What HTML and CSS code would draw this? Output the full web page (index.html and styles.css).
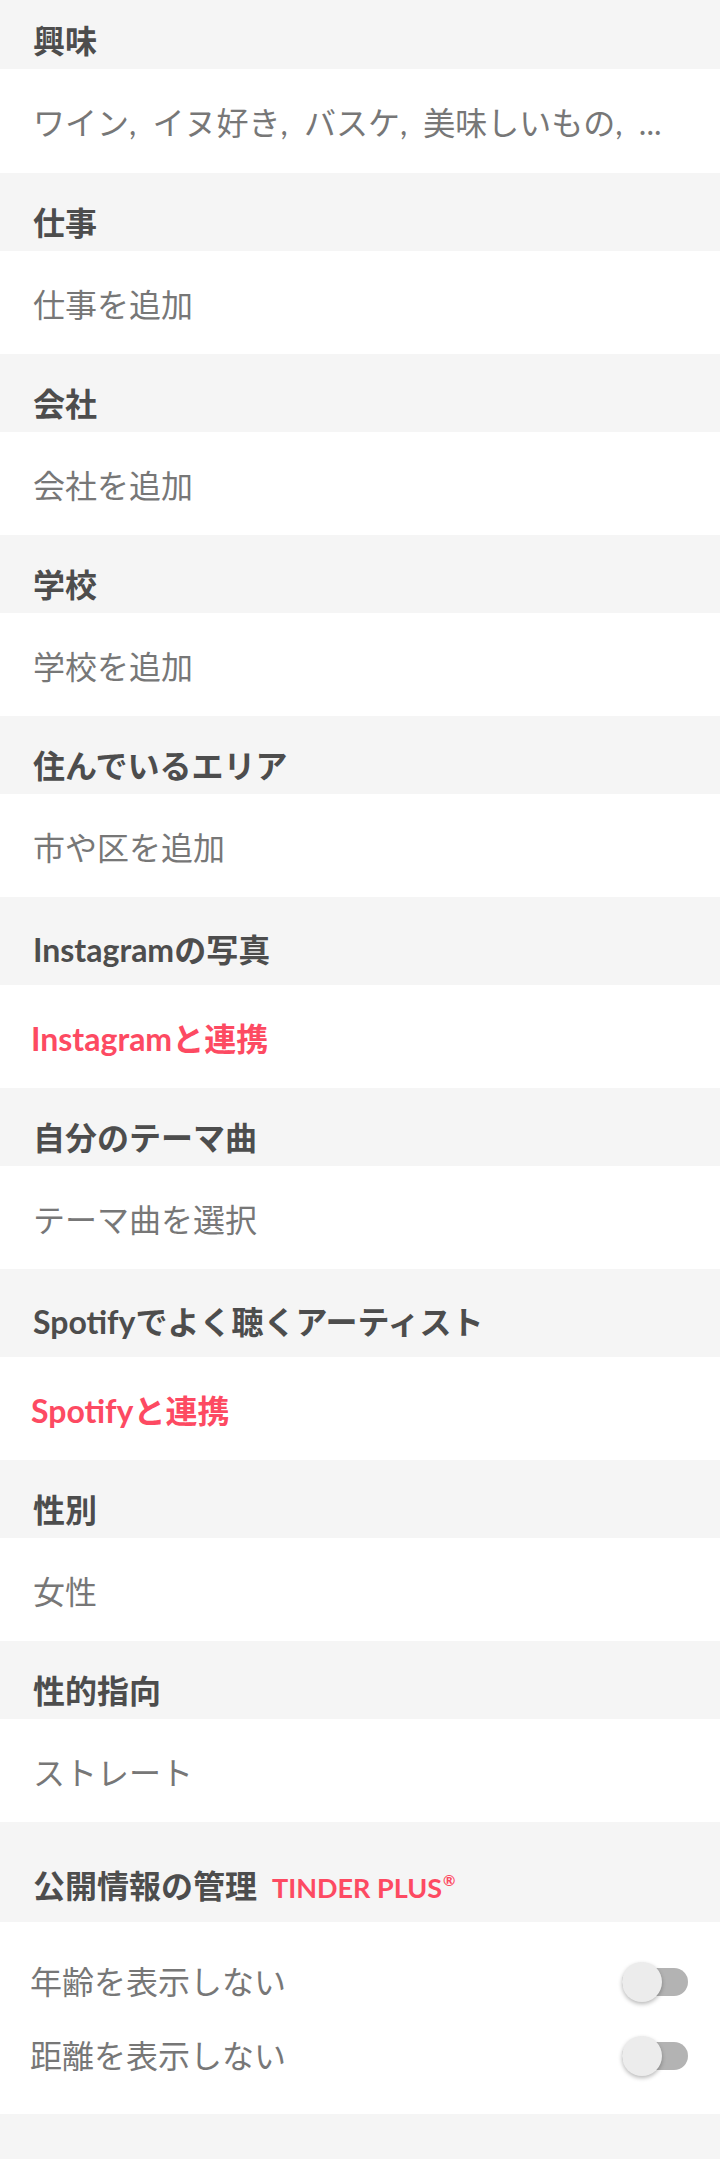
FILE: index.html
```html
<!DOCTYPE html>
<html lang="ja">
<head>
<meta charset="utf-8">
<title>プロフィール編集</title>
<link rel="stylesheet" href="styles.css">
</head>
<body>
<main class="profile">
  <h2 class="sec-head sec-head--first">興味</h2>
  <div class="sec-value sec-value--list">ワイン, イヌ好き, バスケ, 美味しいもの, ...</div>

  <h2 class="sec-head">仕事</h2>
  <div class="sec-value">仕事を追加</div>

  <h2 class="sec-head">会社</h2>
  <div class="sec-value">会社を追加</div>

  <h2 class="sec-head">学校</h2>
  <div class="sec-value">学校を追加</div>

  <h2 class="sec-head">住んでいるエリア</h2>
  <div class="sec-value">市や区を追加</div>

  <h2 class="sec-head sec-head--latin">Instagramの写真</h2>
  <div class="sec-value sec-value--link">Instagramと連携</div>

  <h2 class="sec-head">自分のテーマ曲</h2>
  <div class="sec-value">テーマ曲を選択</div>

  <h2 class="sec-head sec-head--latin">Spotifyでよく聴くアーティスト</h2>
  <div class="sec-value sec-value--link">Spotifyと連携</div>

  <h2 class="sec-head">性別</h2>
  <div class="sec-value">女性</div>

  <h2 class="sec-head">性的指向</h2>
  <div class="sec-value">ストレート</div>

  <h2 class="sec-head sec-head--plus">公開情報の管理<span class="plus-badge">TINDER PLUS<sup class="reg">®</sup></span></h2>
  <div class="toggles">
    <div class="toggle-row">
      <span class="toggle-label">年齢を表示しない</span>
      <span class="switch"><span class="thumb"></span></span>
    </div>
    <div class="toggle-row">
      <span class="toggle-label">距離を表示しない</span>
      <span class="switch"><span class="thumb"></span></span>
    </div>
  </div>
  <div class="footer-space"></div>
</main>
</body>
</html>
```

FILE: styles.css
```css
* {
  box-sizing: border-box;
  margin: 0;
  padding: 0;
}

html, body {
  background: #f5f5f5;
}

body {
  font-family: Lato, "Noto Sans CJK JP", sans-serif;
  width: 720px;
  min-height: 2159px;
}

.profile {
  display: flex;
  flex-direction: column;
}

.sec-head {
  background: #f5f5f5;
  color: #4d4d4d;
  font-size: 32px;
  line-height: 32px;
  font-weight: 700;
  padding: 34px 33px 12px;
  white-space: nowrap;
}

.sec-head--first {
  padding-top: 25px;
}

.sec-head--latin {
  padding-top: 37px;
  padding-bottom: 19px;
}

.sec-head--plus {
  padding-top: 48px;
  padding-bottom: 20px;
}

.plus-badge {
  margin-left: 15px;
  color: #fd4a62;
  font-size: 27px;
  line-height: 1;
  font-weight: 700;
}

.reg {
  font-size: 15px;
  line-height: 0;
  vertical-align: 12px;
  margin-left: 1px;
}

.sec-value {
  background: #fff;
  height: 103px;
  display: flex;
  align-items: center;
  padding: 0 33px;
  font-size: 32px;
  color: #777777;
  white-space: nowrap;
}

.sec-value--list {
  height: 104px;
  word-spacing: 8px;
}

.sec-value--link {
  color: #fd4a62;
  font-weight: 700;
  padding-left: 31px;
}

.toggles {
  background: #fff;
  padding: 21px 32px 23px 30px;
  display: flex;
  flex-direction: column;
}

.toggle-row {
  height: 74px;
  display: flex;
  align-items: center;
  justify-content: space-between;
}

.toggle-label {
  font-size: 32px;
  color: #777777;
}

.switch {
  position: relative;
  width: 66px;
  height: 28px;
  margin-top: 4px;
  border-radius: 14px;
  background: #b3b3b3;
}

.thumb {
  position: absolute;
  left: 0;
  top: -6px;
  width: 40px;
  height: 40px;
  border-radius: 50%;
  background: #ececec;
  box-shadow: 0 2px 4px rgba(0, 0, 0, 0.28);
}

.footer-space {
  height: 46px;
  background: #f5f5f5;
}
```
